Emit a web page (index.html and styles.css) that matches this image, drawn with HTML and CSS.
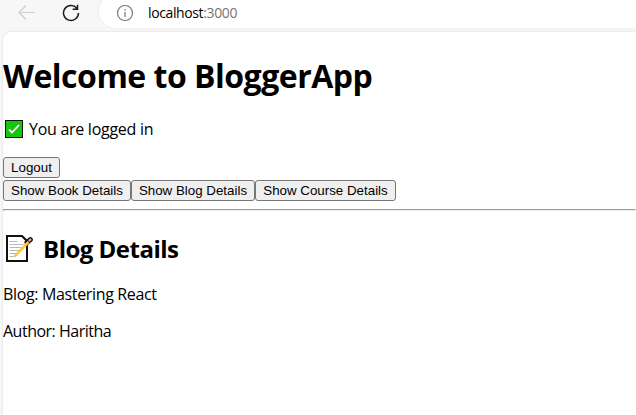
FILE: index.html
```html
<!DOCTYPE html>
<html lang="en">
<head>
<meta charset="utf-8">
<title>BloggerApp</title>
<link rel="stylesheet" href="styles.css">
</head>
<body>
<header class="toolbar">
  <svg class="back" width="18" height="18" viewBox="0 0 18 18"><path d="M17 8.5H1.5M8 1.5l-7 7 7 7"/></svg>
  <svg class="reload" width="18" height="18" viewBox="0 0 18 18"><path d="M16.5 9A7.5 7.5 0 1 1 14.8 4.2M15.5.8v4.4h-4.8"/></svg>
  <div class="address">
    <svg class="info" width="18" height="18" viewBox="0 0 18 18"><circle cx="9" cy="9" r="7.5"/><path d="M9 8v5M9 5v1.5"/></svg>
    <span class="url">localhost<span class="port">:3000</span></span>
  </div>
</header>
<main class="page">
  <h1 class="title">Welcome to BloggerApp</h1>
  <p class="status">
    <svg class="check" width="18" height="18" viewBox="0 0 18 18"><rect x=".5" y=".5" width="17" height="17"/><path d="M4 9.5l3 3 7-7.5"/></svg>
    <span class="status-text">You are logged in</span>
  </p>
  <div class="row"><button class="btn logout">Logout</button></div>
  <div class="row">
    <button class="btn book">Show Book Details</button>
    <button class="btn blog">Show Blog Details</button>
    <button class="btn course">Show Course Details</button>
  </div>
  <hr class="rule">
  <h2 class="subtitle">
    <svg class="memo" width="28" height="28" viewBox="0 0 28 28">
      <path class="paper" d="M2 1H17L22 6V26H2Z"/>
      <path class="lines" d="M4.5 6.5h8M4.5 9.5h14M4.5 12.5h13M4.5 15.5h11M4.5 18.5h8M4.5 21.5h5"/>
      <path class="pencil-edge" d="M22 7.5L25.3 4.7"/>
      <path class="pencil" d="M9.5 21.5L23.5 7"/>
      <path class="eraser" d="M24.5 5.5l.8-.8"/>
    </svg>
    <span>Blog Details</span>
  </h2>
  <p class="text blog-name">Blog: Mastering React</p>
  <p class="text author">Author: Haritha</p>
</main>
</body>
</html>
```

FILE: styles.css
```css
* { box-sizing: border-box; }
body {
  margin: 0;
  height: 415px;
  overflow: hidden;
  background: #f7f7f7;
  color: #000;
  font-family: "Open Sans", "Noto Sans", sans-serif;
}
svg { display: block; flex: none; fill: none; }
.toolbar { display: flex; height: 32px; padding-left: 18px; }
.back { margin-top: 4px; stroke: #cfcfcf; stroke-width: 1.2; }
.reload { margin: 4px 0 0 26px; stroke: #1b1b1b; stroke-width: 1.5; }
.address {
  display: flex;
  flex: 1;
  height: 34px;
  margin: -6px 0 0 19px;
  padding: 10px 0 0 17px;
  border-radius: 17px 0 0 17px;
  background: #fff;
  box-shadow: 0 0 3px #e6e6e6;
}
.info { stroke: #767676; stroke-width: 1.2; }
.url { margin: -1px 0 0 14px; font-size: 14px; line-height: 20px; letter-spacing: -0.38px; }
.port { color: #767676; }
.page {
  height: 383px;
  margin-left: 3px;
  padding: 22px 0 0;
  border-radius: 8px 0 0 0;
  background: #fff;
  box-shadow: 0 0 2px #ccc;
}
.title { margin: 0; font-size: 32px; line-height: 43px; font-weight: 700; letter-spacing: -0.5px; white-space: nowrap; }
.status { display: flex; align-items: center; height: 21px; margin: 21px 0 18px; padding-left: 2px; font-size: 16px; }
.check rect { fill: #16c60c; stroke: #111; }
.check path { stroke: #fff; stroke-width: 1.8; }
.status-text { margin-left: 6px; letter-spacing: -0.28px; }
.row { display: flex; height: 23px; }
.btn {
  height: 21px;
  margin: 0;
  padding: 0;
  border: 1px solid #767676;
  border-radius: 3px;
  background: #efefef;
  color: #000;
  font: 13.333px/19px "Liberation Sans", Arial, sans-serif;
  white-space: nowrap;
}
.logout { width: 57px; }
.book { width: 128px; }
.blog { width: 124px; }
.course { width: 141px; }
.rule { height: 2px; margin: 6px 0 0; border: 1px solid; border-color: #9a9a9a #eee #eee #9a9a9a; }
.subtitle { display: flex; align-items: center; height: 32px; margin: 21px 0 0; padding-left: 2px; font-size: 24px; font-weight: 700; letter-spacing: -0.5px; }
.subtitle span { margin-left: 10px; }
.memo { margin-top: 2px; }
.paper { fill: #fff; stroke: #111; stroke-width: 2; }
.lines { stroke: #b8b8b8; }
.pencil-edge { stroke: #111; stroke-width: 5; stroke-linecap: round; }
.pencil { stroke: #ffc83d; stroke-width: 2.6; }
.eraser { stroke: #e5a1a1; stroke-width: 2.4; stroke-linecap: round; }
.text { margin: 0; font-size: 16px; line-height: 21px; letter-spacing: -0.35px; }
.blog-name { margin-top: 20px; }
.author { margin-top: 16px; letter-spacing: -0.5px; }
```
